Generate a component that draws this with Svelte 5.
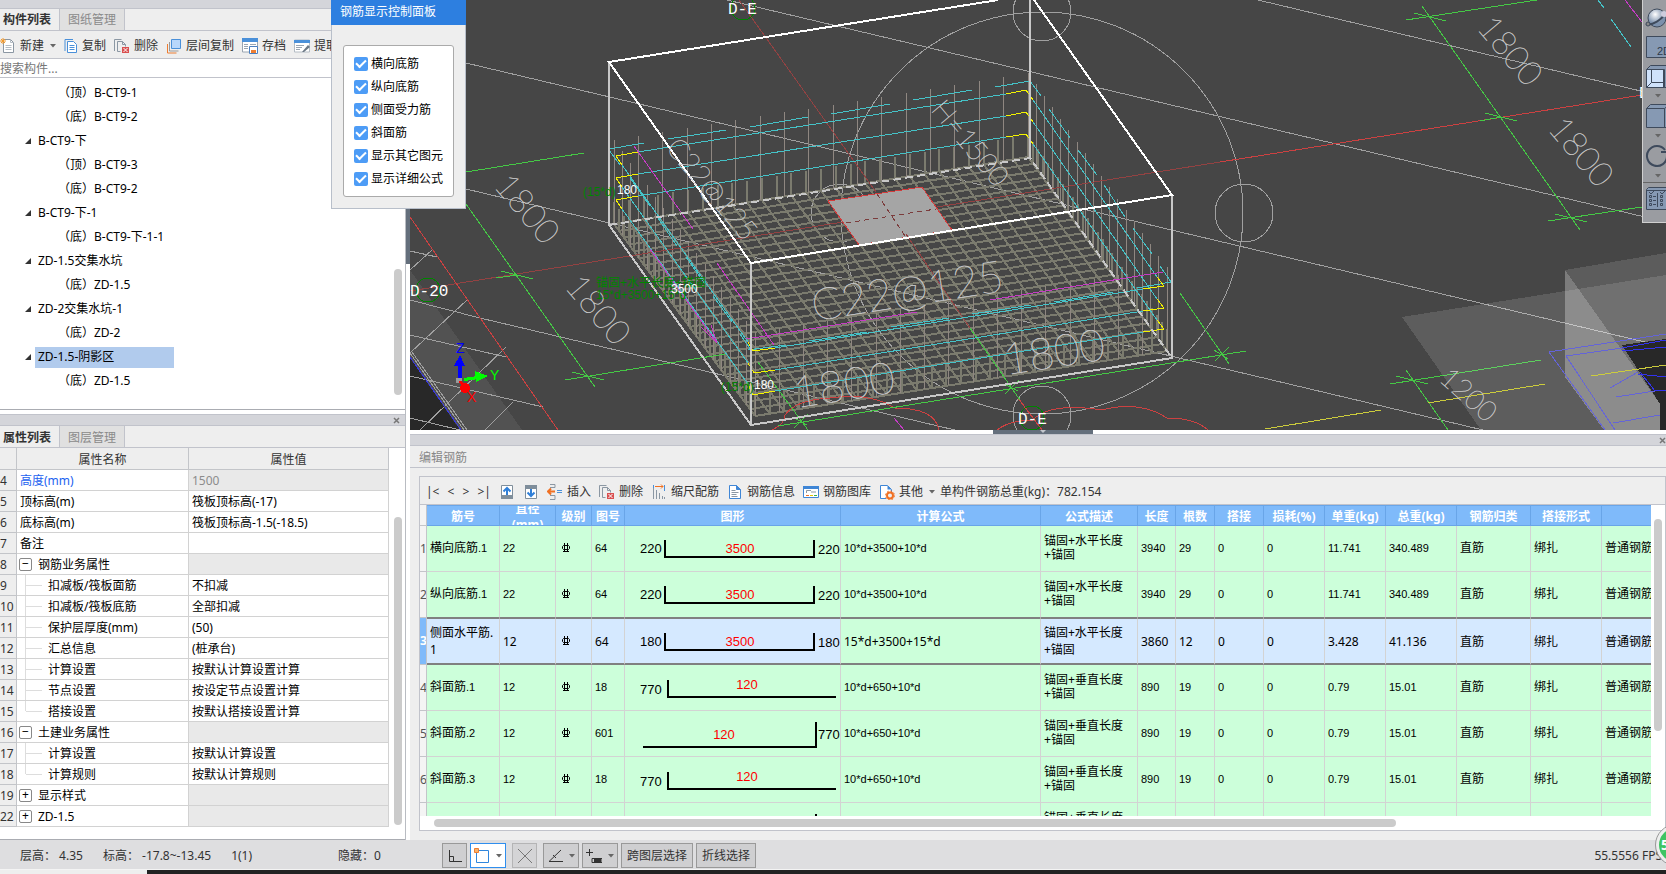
<script>
  const tree = [
    { t: '（顶）B-CT9-1', leaf: true },
    { t: '（底）B-CT9-2', leaf: true },
    { t: 'B-CT9-下' },
    { t: '（顶）B-CT9-3', leaf: true },
    { t: '（底）B-CT9-2', leaf: true },
    { t: 'B-CT9-下-1' },
    { t: '（底）B-CT9-下-1-1', leaf: true },
    { t: 'ZD-1.5交集水坑' },
    { t: '（底）ZD-1.5', leaf: true },
    { t: 'ZD-2交集水坑-1' },
    { t: '（底）ZD-2', leaf: true },
    { t: 'ZD-1.5-阴影区', sel: true },
    { t: '（底）ZD-1.5', leaf: true }
  ];
  const props = [
    { n: 4, k: '高度(mm)', v: '1500', link: true, off: true },
    { n: 5, k: '顶标高(m)', v: '筏板顶标高(-17)' },
    { n: 6, k: '底标高(m)', v: '筏板顶标高-1.5(-18.5)' },
    { n: 7, k: '备注', v: '' },
    { n: 8, k: '钢筋业务属性', v: '', box: '−', off: true },
    { n: 9, k: '扣减板/筏板面筋', v: '不扣减', sub: true },
    { n: 10, k: '扣减板/筏板底筋', v: '全部扣减', sub: true },
    { n: 11, k: '保护层厚度(mm)', v: '(50)', sub: true },
    { n: 12, k: '汇总信息', v: '(桩承台)', sub: true },
    { n: 13, k: '计算设置', v: '按默认计算设置计算', sub: true },
    { n: 14, k: '节点设置', v: '按设定节点设置计算', sub: true },
    { n: 15, k: '搭接设置', v: '按默认搭接设置计算', sub: true, last: true },
    { n: 16, k: '土建业务属性', v: '', box: '−', off: true },
    { n: 17, k: '计算设置', v: '按默认计算设置', sub: true },
    { n: 18, k: '计算规则', v: '按默认计算规则', sub: true, last: true },
    { n: 19, k: '显示样式', v: '', box: '+', off: true },
    { n: 22, k: 'ZD-1.5', v: '', box: '+', off: true }
  ];
  const checks = ['横向底筋', '纵向底筋', '侧面受力筋', '斜面筋', '显示其它图元', '显示详细公式'];
  const cols = [
    ['', 7], ['筋号', 73], ['直径(mm)', 56], ['级别', 36], ['图号', 33], ['图形', 216], ['计算公式', 200],
    ['公式描述', 97], ['长度', 38], ['根数', 39], ['搭接', 49], ['损耗(%)', 61], ['单重(kg)', 61],
    ['总重(kg)', 71], ['钢筋归类', 74], ['搭接形式', 71], ['', 120]
  ];
  const hd = '锚固+水平长度+锚固';
  const vd = '锚固+垂直长度+锚固';
  const rows = [
    { n: 1, name: '横向底筋', s: '1', d: 22, pic: '64', shape: 'u', side: 220, f: '10*d+3500+10*d', desc: hd, len: 3940, cnt: 29, w: '11.741', tw: '340.489' },
    { n: 2, name: '纵向底筋', s: '1', d: 22, pic: '64', shape: 'u', side: 220, f: '10*d+3500+10*d', desc: hd, len: 3940, cnt: 29, w: '11.741', tw: '340.489' },
    { n: 3, name: '侧面水平筋', s: '1', d: 12, pic: '64', shape: 'u', side: 180, f: '15*d+3500+15*d', desc: hd, len: 3860, cnt: 12, w: '3.428', tw: '41.136', sel: true },
    { n: 4, name: '斜面筋', s: '1', d: 12, pic: '18', shape: 'l', side: 770, f: '10*d+650+10*d', desc: vd, len: 890, cnt: 19, w: '0.79', tw: '15.01' },
    { n: 5, name: '斜面筋', s: '2', d: 12, pic: '601', shape: 'r', side: 770, f: '10*d+650+10*d', desc: vd, len: 890, cnt: 19, w: '0.79', tw: '15.01' },
    { n: 6, name: '斜面筋', s: '3', d: 12, pic: '18', shape: 'l', side: 770, f: '10*d+650+10*d', desc: vd, len: 890, cnt: 19, w: '0.79', tw: '15.01' },
    { n: 7, name: '斜面筋', s: '4', d: 12, pic: '601', shape: 'r', side: 770, f: '10*d+650+10*d', desc: vd, len: 890, cnt: 19, w: '0.79', tw: '15.01' }
  ];

  // Corners of the cage floor: back-left, back-right, front-right, front-left
  const A = [614, 224], B = [1028, 157], C = [1167, 351], D = [755, 416];
  const mix = (p, q, t) => [p[0] + (q[0] - p[0]) * t, p[1] + (q[1] - p[1]) * t];
  const seg = (p, q) => `M${p[0].toFixed(1)} ${p[1].toFixed(1)}L${q[0].toFixed(1)} ${q[1].toFixed(1)}`;
  let mesh = '', stubs = '', bars = '';
  const N = 28;
  for (let i = 0; i <= N; i++) {
    const t = i / N;
    mesh += seg(mix(A, B, t), mix(D, C, t)) + seg(mix(A, D, t), mix(B, C, t));
    for (const p of [mix(A, B, t), mix(D, C, t), mix(A, D, t), mix(B, C, t)]) stubs += seg(p, [p[0], p[1] - 22]);
  }
  for (let i = 0; i <= 17; i++) {
    const t = i / 17;
    for (const p of [mix(A, B, t), mix(D, C, t), mix(A, D, t), mix(B, C, t)]) bars += seg(p, [p[0], p[1] - 84]);
  }
  const crosses = [[517, 275], [588, 376], [1430, 17], [1501, 117], [1571, 218], [1412, 380]];
</script>

{#snippet doc()}<path d="M3.500 1.500h7l3 3v10h-10z" fill="#fff" stroke="#8b97a3" /><path d="M10.500 1.500v3h3M5.500 7.500h6M5.500 9.500h6M5.500 11.500h6" fill="none" stroke="#b4bcc4" />{/snippet}
{#snippet del()}<svg class="ic" viewBox="0 0 16 16"><path d="M.5 13V1.500h7" fill="none" stroke="#8b97a3" /><path d="M3.500 13.500v-10h5l3 3v2M8.500 3.500v3h3M3.500 13.500h3" fill="none" stroke="#8b97a3" /><path d="M8 9h7v6H8z" fill="#d95050" /><path d="M9.500 10l4 4m0-4l-4 4" stroke="#fff" /></svg>{/snippet}
{#snippet caret()}<svg class="caret" viewBox="0 0 6 4"><path d="M0 0h6L3 3.500z" fill="#666" /></svg>{/snippet}

<div class="app">
  <main>
    <section class="left">
      <div class="strip"></div>
      <nav class="tabs"><button class="on">构件列表</button><button>图纸管理</button></nav>
      <div class="tools">
        <button><svg class="ic" viewBox="0 0 16 16">{@render doc()}<path d="M3 0v6M0 3h6M1 1l4 4m0-4L1 5" stroke="#f29a2e" /></svg>新建{@render caret()}</button>
        <button><svg class="ic slim" viewBox="0 0 14 16"><path d="M1 13V1.500h8" fill="none" stroke="#4a90d9" /><path d="M3.500 3.500h6l3 3v8h-9z" fill="#fff" stroke="#4a90d9" /><path d="M5.500 7.500h5M5.500 9.500h5M5.500 11.500h5" stroke="#4a90d9" /></svg>复制</button>
        <button>{@render del()}删除</button>
        <button><svg class="ic" viewBox="0 0 16 16"><path d="M1.500 6v9h9" fill="none" stroke="#ee7d31" /><path d="M3.500 4v9h9" fill="none" stroke="#999" /><path d="M5.500 1.500h9v9h-9z" fill="#b8d7fb" stroke="#4a90d9" /></svg>层间复制</button>
        <button><svg class="ic" viewBox="0 0 16 16"><path d="M.5 1h15v13H.5z" fill="#fff" stroke="#9aa5b1" /><path d="M0 0h16v4H0z" fill="#4a90d9" /><path d="M2 6.500h4M2 8.500h4M2 10.500h4M8 6.500h6" stroke="#9aa5b1" /><path d="M7.500 8.500h8v7h-8z" fill="#fff" stroke="#4a7fc0" /><path d="M9 12h5v3H9z" fill="#ee7d31" /></svg>存档</button>
        <button><svg class="ic" viewBox="0 0 16 16"><path d="M.5 2h15v12H.5z" fill="#fff" stroke="#b4bcc4" /><path d="M0 2h16v3H0z" fill="#4a90d9" /><path d="M2 7.500h8M2 9.500h6M2 11.500h4" stroke="#9aa5b1" /><path d="M8 14l6-7 2 2-6 5z" fill="#6b7885" /></svg>提取</button>
      </div>
      <input class="search" aria-label="搜索构件" placeholder="搜索构件..." />
      <div class="tree">
        <ul>
          {#each tree as r}
            <li class:leaf={r.leaf}>
              {#if !r.leaf}<svg viewBox="0 0 6 6"><path d="M6 0v6H0z" fill="#333" /></svg>{/if}
              <button class:sel={r.sel}>{r.t}</button>
            </li>
          {/each}
        </ul>
        <i class="bar"></i>
      </div>
      <div class="strip second"><button aria-label="关闭"><svg viewBox="0 0 7 7"><path d="M1 1l5 5M6 1L1 6" stroke="#777" stroke-width="1.500" /></svg></button></div>
      <nav class="tabs low"><button class="on">属性列表</button><button>图层管理</button></nav>
      <div class="props">
        <table>
          <thead><tr><th class="no"></th><th class="key">属性名称</th><th>属性值</th></tr></thead>
          <tbody>
            {#each props as p}
              <tr>
                <th class="no">{p.n}</th>
                <td class:link={p.link} class:sub={p.sub} class:last={p.last}>
                  {#if p.box}<button class="box" aria-label="展开">{p.box}</button>{/if}{p.k}
                </td>
                <td class:off={p.off}>{p.v}</td>
              </tr>
            {/each}
          </tbody>
        </table>
        <i class="bar"></i>
      </div>
    </section>

    <div class="split"><i></i></div>

    <section class="right">
      <div class="view">
        <svg class="scene" viewBox="410 0 1256 430" preserveAspectRatio="xMinYMin slice">
          <path d="M410 270L522 430H461L410 357z" fill="#525252" />
          <path d="M410 358L460 430H410z" fill="#282828" />
          <g fill="none" stroke="#a0a0a0">
            <path d="M466 63L1666 347M727 0L1666 222M1258 0L1666 97M466 189L1483 430M480 318L955 430M410 251L437 257M410 300L480 318M410 335L506 357M410 376L543 407M410 418L460 430M410 270L432 250M410 353L467 300M420 430L506 347M485 430L513 402M410 353L464 430M412 352L467 430" />
            <circle cx="1042" cy="213" r="201" />
            <circle cx="1042" cy="12" r="29" /><circle cx="1244" cy="213" r="29" /><circle cx="840" cy="213" r="29" /><circle cx="1042" cy="415" r="29" />
          </g>
          <path d="M410 357L461 430" stroke="#3a3ae0" />
          <path d={mesh} class="mesh" />
          <path d={stubs} class="mesh" />
          <path d={bars} stroke="#8f8781" />
          <path d="M828 201L922 187 952 230 859 245z" fill="#a5a5a5" stroke="#d23c3c" />
          <path d="M739 0L876 192M906 234L970 328M410 291L843 222M937 207L1220 162" stroke="#934242" fill="none" />
          <path d="M846 223L936 209M877 194L905 236" stroke="#7b3c3c" stroke-dasharray="5 4" />
          <path d="M410 217L558 430M1220 162L1642 95M1018 398L1042 430" stroke="#cc4141" fill="none" />
          <path d="M772 430Q785 424 785 415 795 400 830 398 870 392 895 408 935 408 939 430M997 430Q1010 420 1033 420 1050 402 1102 410 1140 400 1167 418 1195 418 1208 430" stroke="#cc4141" fill="none" />
          <g fill="none" stroke="#45c845">
            <path d="M466 172L584 153M466 204L595 387M517 275L496 278M565 380L725 354M778 426L1246 351M1180 293L1229 364M970 328L1020 400M758 362L808 430M1406 20L1537 0M1422 6L1580 230M1480 121L1501 117M1548 221L1642 207M1390 384L1541 360M1406 370L1448 430" />
            {#each crosses as c}<path d={`M${c[0] - 16} ${c[1] - 4}l32 8`} />{/each}
            <path d="M794 428l14-14M1005 394l14-14M1215 361l14-14M793 417l14 8M1004 384l14 7M1214 350l14 9" />
          </g>
          <g fill="none" stroke="#45c3c8">
            <path d="M638 152L1006 94M638 174L1006 116M638 196L1006 137M775 348L1143 289M775 370L1143 311M775 391L1143 332" />
            <path d="M1033 100L1157 277M1033 122L1157 299M1033 144L1157 320M622 165L748 342M622 187L748 363M622 209L748 384" />
            <path d="M609 149L644 143M668 139L726 130M750 127L808 117M831 114L890 104M913 100L972 90M995 87L1030 81L1041 96M1049 109L1070 138M1078 150L1097 175M1104 185L1125 217M1133 228L1152 254M1160 266L1171 282L1137 288M748 350L786 345M809 341L867 332M891 327L949 318M972 314L1031 305M1054 302L1113 292M609 150L620 165M630 178L650 206M658 218L677 246M686 257L705 284M713 296L732 322M740 334L751 350M1598 0L1604 8M1611 19L1631 47" />
          </g>
          <path d="M638 152L616 156 622 165M638 174L616 178 622 187M638 196L616 200 622 209M1006 94L1026 90 1033 100M1006 116L1026 112 1033 122M1006 137L1026 134 1033 144M775 348L753 351 748 342M775 370L754 373 748 363M775 391L753 395 748 384M1143 289L1164 286 1157 277M1143 311L1164 308 1157 299M1143 332L1164 329 1157 320" fill="none" stroke="#f4f400" />
          <path d="M634 146L693 229M650 249L717 343M717 263L774 345M746 339L917 312M990 300L1163 272M717 343L701 327M717 343L711 325M894 418l10 12M1625 0L1642 22" fill="none" stroke="#c63cc6" />
          <g fill="none" stroke="#c8c8c8" stroke-width="2">
            <path d="M609 62V225L751 425 1172 358V195M751 263V425M1030 0V158" />
            <path d="M609 225L1030 158 1172 358" stroke-dasharray="8 4" />
          </g>
          <path d="M998 0L609 62 751 263 1172 195 1034 0" fill="none" stroke="#fff" stroke-width="2" />
          <path d="M1402 317L1666 275V430H1481z" fill="#fff" fill-opacity=".13" />
          <path d="M1565 270L1666 253V430H1604L1565 377z" fill="#fff" fill-opacity=".12" />
          <path d="M1622 345L1666 339V430H1660V404z" fill="#282828" />
          <path d="M1565 270L1660 404V430H1604L1565 377z" fill="#fff" fill-opacity=".2" />
          <path d="M1605 430L1549 352 1666 334M1615 430L1566 356 1622 348M1613 423L1660 415M1610 388L1638 372M1616 397L1655 391" fill="none" stroke="#6464d8" />
          <path d="M1622 348L1666 340M1622 351L1666 347M1638 374L1666 377M1640 372L1655 391 1666 390" fill="none" stroke="#3232f0" />
          <path d="M1265 429L1381 410M1428 403L1545 384M1591 376L1666 365" stroke="#cccc3c" />
          <g class="plan">
            <text transform="translate(1476 28) rotate(50)">1800</text>
            <text transform="translate(1547 129) rotate(50)">1800</text>
            <text transform="translate(493 186) rotate(50)">1800</text>
            <text transform="translate(564 287) rotate(50)">1800</text>
            <text transform="translate(1438 380) rotate(42)" class="small">1200</text>
            <text transform="translate(665 148) rotate(50)" class="small">C22@125</text>
            <text transform="translate(930 110) rotate(50)" class="small">H=1500</text>
            <text class="big" transform="translate(814 321) rotate(-9)">C22@125</text>
            <text class="big" transform="translate(1006 375) rotate(-9)">1800</text>
            <text class="big" transform="translate(796 408) rotate(-9)">1800</text>
          </g>
          <g fill="none" stroke="#008400"><circle cx="743" cy="8" r="12" /><circle cx="428" cy="290" r="12" /><circle cx="1032" cy="418" r="12" /></g>
          <g class="axis"><text x="728" y="14">D-E</text><text x="410" y="296">D-20</text><text x="1018" y="424">D-E</text><text x="1639" y="98">D</text></g>
          <g class="dim">
            <text x="583" y="196" class="gr">(15*d)</text><text x="617" y="194">180</text>
            <text x="596" y="287" class="gr">锚固+水平长度+锚固</text><text x="596" y="299" class="gr">15*d+3500+15*d</text><text x="671" y="293">3500</text>
            <text x="721" y="391" class="gr">(15*d)</text><text x="754" y="389">180</text>
          </g>
          <path d="M460 381V364" stroke="#00f" stroke-width="4" /><path d="M454 366l6-11 5 11z" fill="#00f" />
          <path d="M464 379.500L478 377.500" stroke="#0f0" stroke-width="3" /><path d="M475 371l13 5-12 6z" fill="#0f0" />
          <path d="M456 378h6v5h-6z" fill="#999" /><circle cx="465" cy="388" r="5" fill="#f00" /><path d="M460 381l5 7" stroke="#f00" stroke-width="3" />
          <text x="456" y="353" class="xyz" fill="#00f">Z</text><text x="490" y="380" class="xyz" fill="#0f0">Y</text><text x="467" y="402" class="xyz" fill="#f00">X</text>
        </svg>

        <div class="orbit">
          <button aria-label="动态观察"><svg viewBox="0 0 30 28"><defs><radialGradient id="ball" cx=".4" cy=".3"><stop offset="0" stop-color="#fff" /><stop offset="1" stop-color="#7b90ac" /></radialGradient></defs><circle cx="14" cy="14" r="9" fill="url(#ball)" stroke="#3e4a5c" /><path d="M3 20c6 2 16-4 21-13" fill="none" stroke="#3e4a5c" stroke-width="2" /><circle cx="5" cy="20" r="2" fill="#888" stroke="#3e4a5c" /><circle cx="21" cy="10" r="3" fill="#ccd" /></svg></button>
          <button aria-label="二维"><svg viewBox="0 0 30 28"><path d="M3.500 4.500h26v21h-26z" class="blue" /><text x="14" y="23" class="two">2D</text></svg></button>
          <button aria-label="线框" class="gap"><svg viewBox="0 0 30 28"><path d="M3.500 7.500l4-4h22v22h-26z" class="blue" /><path d="M3.500 7.500h18v18h-18z" class="lit" /><path d="M8.500 7.500v13h13M3.500 25.500l5-5M20.500 7v19" class="ln" /></svg></button>
          {@render caret()}
          <button aria-label="实体"><svg viewBox="0 0 30 28"><path d="M3.500 6.500l4-4h22v23h-26zM3.500 6.500h18v19M21.500 6.500l5-4" class="blue" /></svg></button>
          {@render caret()}
          <button aria-label="旋转"><svg viewBox="0 0 30 28"><path d="M22 8a10 10 0 1 0 2 6" class="ln thick" /><path d="M18 10h6V4" class="ln thick" /></svg></button>
          {@render caret()}
          <hr />
          <button aria-label="显示设置"><svg viewBox="0 0 30 28"><path d="M3.500 6.500l2-2h24v22h-26zM3.500 7.500h24" class="blue" /><path d="M14.500 10v14M6 9l2 2 3-3M17 9l2 2 3-3M10 13.500h3M10 17.500h3M10 21.500h3M6.500 12.500h2v2h-2zM6.500 16.500h2v2h-2zM6.500 20.500h2v2h-2zM17.500 12.500h2v2h-2zM17.500 16.500h2v2h-2zM17.500 20.500h2v2h-2z" class="ln" /></svg></button>
        </div>
      </div>

      <div class="grip"><i><svg viewBox="0 0 6 3"><path d="M0 0h6L3 3z" fill="#c3c8ce" /></svg></i></div>
      <div class="strip wide"><button aria-label="关闭"><svg viewBox="0 0 7 7"><path d="M1 1l5 5M6 1L1 6" stroke="#777" stroke-width="1.500" /></svg></button></div>
      <h2>编辑钢筋</h2>
      <div class="editor">
        <div class="tools rt">
          <div class="nav"><button>|&lt;</button><button>&lt;</button><button>&gt;</button><button>&gt;|</button></div>
          <button aria-label="上移"><svg class="ic" viewBox="0 0 16 16"><path d="M2.500 1.500h11v12h-11z" fill="#fff" stroke="#7f8e9b" /><path d="M2 11h12v4H2z" fill="#7f8e9b" /><path d="M8 11V4M4.500 7.500L8 4l3.500 3.500" fill="none" stroke="#2f7fd8" stroke-width="2" /></svg></button>
          <button aria-label="下移"><svg class="ic" viewBox="0 0 16 16"><path d="M2.500 2.500h11v12h-11z" fill="#fff" stroke="#7f8e9b" /><path d="M2 1h12v4H2z" fill="#7f8e9b" /><path d="M8 5v7M4.500 8.500L8 12l3.500-3.500" fill="none" stroke="#2f7fd8" stroke-width="2" /></svg></button>
          <button><svg class="ic" viewBox="0 0 16 16"><path d="M3 .5h5v3H3M3 15.500h5v-4H3" fill="none" stroke="#8b97a3" /><path d="M1 7.500h7M4 4.500l-3 3 3 3" fill="none" stroke="#f07022" stroke-width="2" /><path d="M10 6.500h5M10 8.500h5" stroke="#4a90d9" /></svg>插入</button>
          <button>{@render del()}删除</button>
          <button><svg class="ic" viewBox="0 0 16 16"><path d="M2.500 1v14M5.500 6v9M8.500 9v6M11.500 12v3M13.500 13v2" stroke="#8b97a3" /><path d="M2.500 1v3M13.500 1v6" stroke="#4a90d9" /><path d="M4 2.500h8M10 .5l2 2-2 2" stroke="#f07022" fill="none" /></svg>缩尺配筋</button>
          <button><svg class="ic" viewBox="0 0 16 16"><path d="M2.500 1.500h7l4 4v9h-11z" fill="#fff" stroke="#3f86d6" /><path d="M9.500 1.500v4h4z" fill="#3f86d6" stroke="#3f86d6" /><path d="M4.500 6.500h4M4.500 8.500h7M4.500 10.500h5M4.500 12.500h6" stroke="#8b97a3" /></svg>钢筋信息</button>
          <button><svg class="ic" viewBox="0 0 16 16"><path d="M.5 2.500h15v11H.5z" fill="#fff" stroke="#3f86d6" /><path d="M0 2h16v3H0z" fill="#3f86d6" /><path d="M3.500 9V6.500H8M8 8h5" fill="none" stroke="#8b97a3" /><path d="M3 11.500h3" stroke="#f07022" /><path d="M7 11.500h3" stroke="#e3c300" /><path d="M11 11.500h3" stroke="#39b54a" /></svg>钢筋图库</button>
          <button><svg class="ic" viewBox="0 0 16 16"><path d="M7 14.500H1.500v-13h7l4 4V8" fill="#fff" stroke="#3f86d6" /><path d="M8.500 1.500v4h4z" fill="#3f86d6" /><circle cx="11" cy="11.500" r="3" fill="none" stroke="#f07022" stroke-width="2" /><circle cx="11" cy="11.500" r="4.500" fill="none" stroke="#f07022" stroke-dasharray="1.800 1.700" /></svg>其他{@render caret()}</button>
          <span class="total">单构件钢筋总重(kg)：782.154</span>
        </div>
        <div class="grid">
          <div class="clip">
            <table>
              <colgroup>{#each cols as c}<col style:width={`${c[1]}px`} />{/each}</colgroup>
              <thead><tr>{#each cols as c, i}<th class:no={i === 0}><div>{c[0]}</div></th>{/each}</tr></thead>
              <tbody>
                {#each rows as r, i}
                  <tr class:sel={r.sel} class:before={rows[i + 1]?.sel}>
                    <th class="no">{r.n}</th>
                    <td class="cjk">{r.name}<span class="num">.<wbr />{r.s}</span></td>
                    <td class="num">{r.d}</td>
                    <td><svg class="grade" viewBox="0 0 10 10"><path d="M3.500 0v9M6.500 0v9M3.500 2.500h-1l-1 1v2l1 1h5l1-1v-2l-1-1zM2 8.500h6" fill="none" stroke="#000" /></svg></td>
                    <td class="num">{r.pic}</td>
                    <td class="pic">
                      <svg viewBox="0 0 215 44">
                        {#if r.shape === 'u'}
                          <path d="M40 14V31H189V14" /><text x="15" y="27">{r.side}</text><text x="193" y="28">{r.side}</text><text x="115" y="27" class="mid">3500</text>
                        {:else if r.shape === 'l'}
                          <path d="M43 15V32H211" /><text x="15" y="29">{r.side}</text><text x="122" y="24" class="mid">120</text>
                        {:else}
                          <path d="M18 36H191V11" /><text x="193" y="28">{r.side}</text><text x="99" y="28" class="mid">120</text>
                        {/if}
                      </svg>
                    </td>
                    <td class="num green">{r.f}</td>
                    <td class="cjk desc">{r.desc}</td>
                    <td class="num">{r.len}</td>
                    <td class="num">{r.cnt}</td>
                    <td class="num">0</td>
                    <td class="num">0</td>
                    <td class="num">{r.w}</td>
                    <td class="num">{r.tw}</td>
                    <td class="cjk">直筋</td>
                    <td class="cjk">绑扎</td>
                    <td class="cjk">普通钢筋</td>
                  </tr>
                {/each}
              </tbody>
            </table>
          </div>
          <i class="bar"></i>
          <i class="hbar"></i>
        </div>
      </div>
    </section>

    <div class="dialog">
      <h3>钢筋显示控制面板</h3>
      <div class="group">
        {#each checks as c}<label><input type="checkbox" checked />{c}</label>{/each}
      </div>
    </div>
  </main>

  <footer>
    <div class="info"><span>层高：&nbsp;4.35</span><span>标高：&nbsp;-17.8~-13.45</span><span>1(1)</span><span class="hid">隐藏：0</span></div>
    <button class="sq" aria-label="正交"><svg viewBox="0 0 16 16"><path d="M2.500 2v11.500H15M2.500 8.500h4v5" /></svg></button>
    <button class="dd act" aria-label="框选"><svg viewBox="0 0 16 16"><path d="M2.500 2.500h12v12h-12z" class="frame" /><path d="M.5.5h4v4h-4z" class="knob" /></svg>{@render caret()}</button>
    <button class="sq dim2" aria-label="交点"><svg viewBox="0 0 16 16"><path d="M1 1l14 14M15 1L1 15" /></svg></button>
    <button class="dd" aria-label="角度"><svg viewBox="0 0 16 16"><path d="M14 2L2 13.500h14M6 7l3 3" /></svg>{@render caret()}</button>
    <button class="dd" aria-label="坐标"><svg viewBox="0 0 16 16"><path d="M0 4.500h7M3.500 1v7M6 10.500h10v4H6z" /><path d="M8 12.500h7" stroke-width="4" /></svg>{@render caret()}</button>
    <button class="tx">跨图层选择</button>
    <button class="tx">折线选择</button>
    <span class="fps">55.5556 FPS</span>
    <b class="ball">56</b>
  </footer>
  <div class="task"><i></i></div>
</div>

<style>
  :global(body) { margin: 0; background: #fff; }
  * { box-sizing: border-box; }
  .app { position: relative; display: flex; flex-direction: column; height: 100vh; min-height: 780px; overflow: hidden; font: 12px/16px "Noto Sans", "Noto Sans CJK SC", sans-serif; color: #333; }
  button { font: inherit; color: inherit; background: none; border: 0; padding: 0; margin: 0; white-space: nowrap; }
  svg { display: block; flex: none; }
  table { border-collapse: separate; border-spacing: 0; table-layout: fixed; }
  main { flex: 1; min-height: 0; display: flex; position: relative; }
  .left { width: 406px; flex: none; display: flex; flex-direction: column; border-right: 1px solid #b9bcc2; }
  .strip { height: 9px; background: #d4d5da; border-bottom: 1px solid #c1c3cb; flex: none; display: flex; justify-content: flex-end; align-items: center; }
  .strip.second, .strip.wide { height: 12px; border-top: 1px solid #c1c3cb; }
  .strip.second { margin-top: 4px; padding-right: 5px; }
  .strip svg { width: 7px; height: 7px; }
  .tabs { height: 22px; flex: none; display: flex; background: #eee; border-bottom: 1px solid #c1c3cb; }
  .tabs button { width: 65px; background: #e0e0e0; color: #8a8a8a; border-right: 1px solid #c1c3cb; }
  .tabs .on { width: 60px; background: #eee; color: #333; font-weight: 700; text-align: left; padding-left: 3px; }
  .low button { padding-top: 2px; }
  .tools { height: 28px; flex: none; display: flex; align-items: center; gap: 8px; background: #eee; border-bottom: 1px solid #c1c3cb; overflow: hidden; padding-top: 2px; }
  .tools button { display: flex; align-items: center; gap: 4px; }
  .ic { width: 16px; height: 16px; }
  .slim { width: 14px; }
  .caret { width: 6px; height: 4px; margin-left: 2px; }
  .search { height: 19px; flex: none; border: 0; border-bottom: 1px solid #c1c3cb; padding: 0; font: inherit; outline: 0; width: 100%; background: #fff; }
  .search::placeholder { color: #777; opacity: 1; }
  .tree { flex: 1; min-height: 0; position: relative; border-bottom: 1px solid #aaacb2; background: #fff; overflow: hidden; color: #000; }
  .tree ul { list-style: none; margin: 0; padding: 3px 0 0; }
  .tree li { height: 24px; display: flex; align-items: center; gap: 4px; padding-left: 25px; }
  .tree li svg { width: 6px; height: 6px; }
  .tree .leaf { padding-left: 58px; }
  .tree li:not(.leaf) button { padding: 0 3px; height: 21px; }
  .tree .sel { background: #b1cbed; width: 139px; text-align: left; }
  .bar { position: absolute; width: 8px; border-radius: 4px; background: #cbcbcb; right: 3px; }
  .tree .bar { top: 191px; bottom: 14px; }
  .props { position: relative; background: #fff; border-bottom: 1px solid #aaacb2; padding-bottom: 12px; color: #000; }
  .props table { width: 389px; }
  .props th { height: 22px; padding: 2px 0 0; background: #eee; font-weight: 400; color: #333; border-right: 1px solid #c3c5c9; border-bottom: 1px solid #c3c5c9; }
  .props .no { width: 17px; text-align: left; height: 21px; }
  .props .key { width: 172px; }
  .props td { height: 21px; padding: 2px 3px 0; white-space: nowrap; overflow: hidden; border-right: 1px solid #d2d2d2; border-bottom: 1px solid #d2d2d2; }
  .props .off { background: #e9e9e9; color: #8c8c8c; }
  .props .link { color: #1c62f0; }
  .props .sub { padding-left: 31px; background: linear-gradient(#ddd, #ddd) 8px 0 / 1px 100% no-repeat, linear-gradient(#ddd, #ddd) 9px 10px / 16px 1px no-repeat; }
  .props .sub.last { background: linear-gradient(#ddd, #ddd) 8px 0 / 1px 10px no-repeat, linear-gradient(#ddd, #ddd) 9px 10px / 16px 1px no-repeat; }
  .box { width: 13px; height: 13px; border: 1px solid #888; border-radius: 2px; background: #fff; line-height: 10px; margin: 0 6px 0 -1px; text-align: center; vertical-align: 1px; }
  .props .bar { top: 69px; bottom: 14px; }
  .split { width: 4px; flex: none; background: #fff; }
  .split i { display: block; height: 264px; background: #646f7c; }
  .right { flex: 1; min-width: 0; display: flex; flex-direction: column; background: #eee; }
  .view { flex: 1; min-height: 0; position: relative; background: #464646; overflow: hidden; }
  .scene { width: 100%; height: 100%; shape-rendering: crispEdges; }
  .mesh { fill: none; stroke: #7b7b6e; stroke-width: 2; }
  .plan { fill: #c8c8c8; stroke: #c8c8c8; stroke-width: .4px; font: 100 34px Lato, sans-serif; }
  .plan .small { font-size: 28px; }
  .plan .big { font-size: 44px; }
  .axis { fill: #fff; font: 16px "Liberation Mono", monospace; }
  .dim { fill: #fff; font: 12px "Liberation Sans", "Noto Sans CJK SC", sans-serif; }
  .dim .gr { fill: #008400; }
  .xyz { font: 14px "Liberation Sans", sans-serif; }
  .orbit { position: absolute; right: 0; top: 0; width: 24px; padding: 4px 0 11px; background: #9a9ca1; border-left: 1px solid #d0d0d0; border-bottom: 1px solid #d0d0d0; overflow: hidden; }
  .orbit svg { width: 30px; height: 28px; }
  .orbit .caret { width: 6px; height: 4px; margin: 4px 0 4px 12px; }
  .orbit hr { margin: 0; border: 0; border-top: 1px solid #666; }
  .orbit button { display: block; }
  .orbit .gap { margin-top: 2px; }
  .blue { fill: #8699b3; stroke: #3e4a5c; }
  .lit { fill: #cfe2fb; stroke: #3e4a5c; }
  .ln { fill: none; stroke: #3e4a5c; }
  .thick { stroke-width: 2; }
  .two { font: 11px "Liberation Sans", sans-serif; fill: #2d3848; }
  .grip { height: 4px; flex: none; background: #fff; display: flex; justify-content: center; }
  .grip i { width: 100px; background: #646f7c; display: flex; justify-content: center; margin-left: 10px; }
  .grip svg { width: 6px; height: 3px; }
  h2 { margin: 0 0 8px; height: 22px; font: inherit; line-height: 23px; padding-left: 9px; color: #888; border-bottom: 1px solid #c1c3cb; }
  .editor { margin: 0 0 9px 9px; border: 1px solid #c1c3cb; }
  .rt { padding-left: 6px; }
  .nav { display: flex; gap: 8px; }
  .nav button { min-width: 7px; }
  .total { margin-left: -3px; white-space: nowrap; }
  .grid { position: relative; background: #fff; padding: 0 14px 14px 0; }
  .clip { overflow: hidden; height: 311px; }
  .grid table { width: 1302px; color: #000; }
  .grid th { height: 21px; padding: 0; background: #7fbafa; color: #fff; font-weight: 700; border-right: 1px solid #69a5e8; border-bottom: 1px solid #69a5e8; border-top: 1px solid #69a5e8; }
  .grid th div { height: 19px; overflow: hidden; display: flex; align-items: center; justify-content: center; text-align: center; padding: 2px 8px 0; }
  .grid th:not(:nth-child(3)) div { white-space: nowrap; padding: 2px 0 0; }
  .grid .no { background: #f4f4f4; color: #555; font-weight: 400; border-top: 0; border-right: 1px solid #c3c5c9; border-bottom: 1px solid #c3c5c9; overflow: hidden; }
  .grid td { height: 46px; padding: 0 3px 2px; background: #ccffda; border-right: 1px solid #d3d3d3; border-bottom: 1px solid #d3d3d3; line-height: 14px; overflow: hidden; }
  .grid td.cjk:last-child { white-space: nowrap; }
  .cjk { font-family: "Liberation Sans", "Noto Sans CJK SC", sans-serif; }
  .num { font: 11px/14px "Liberation Sans", sans-serif; white-space: nowrap; }
  .grid .before td { border-bottom-color: #808080; }
  .grid .sel td { background: #d5e9ff; border-top: 1px solid #808080; border-bottom: 2px solid #808080; padding-bottom: 0; font: 12px/17px "Noto Sans", "Noto Sans CJK SC", sans-serif; }
  .grid .sel .cjk .num { font: inherit; white-space: normal; }
  .grid .sel .green { background: #ccffda; }
  .grid .sel .no { background: #7fbafa; color: #fff; font-weight: 700; }
  .grade { width: 10px; height: 10px; margin-left: 2px; }
  .grid td.pic, .grid .sel td.pic { padding: 0; vertical-align: top; }
  .pic svg { width: 215px; height: 44px; }
  .pic path { fill: none; stroke: #000; stroke-width: 2; }
  .pic text { font: 13px "Liberation Sans", sans-serif; }
  .pic .mid { fill: #f00; text-anchor: middle; }
  .grid .bar { top: 14px; height: 212px; }
  .hbar { position: absolute; left: 14px; right: 269px; bottom: 3px; height: 8px; border-radius: 4px; background: #cbcbcb; }
  .dialog { position: absolute; left: 331px; top: 0; width: 135px; height: 209px; background: #eee; border: 1px solid #b8bfca; border-top: 0; }
  h3 { margin: 0 -1px; height: 25px; padding-left: 9px; font: inherit; line-height: 24px; color: #fff; background: #2d7fe0; }
  .group { margin: 20px 11px 0; height: 152px; padding: 8px 0 0 10px; background: #fff; border: 1px solid #aaa; border-radius: 3px; }
  .group label { display: flex; align-items: center; gap: 3px; height: 23px; color: #000; white-space: nowrap; padding-bottom: 4px; }
  .group input { appearance: none; width: 14px; height: 14px; margin: 0; background: #4d9cf6; border-radius: 2px; display: grid; place-items: center; }
  .group input::after { content: ""; width: 8px; height: 4px; border: solid #fff; border-width: 0 0 2px 2px; transform: rotate(-45deg) translate(1px, -1px); }
  footer { height: 30px; flex: none; display: flex; align-items: center; background: #dedee0; border-bottom: 1px solid #f4f4f4; position: relative; padding-top: 2px; }
  footer button { height: 25px; border: 1px solid #999; background: #cfcfd1; display: flex; align-items: center; justify-content: center; margin-right: 3px; }
  footer svg { width: 16px; height: 16px; }
  footer path { fill: none; stroke: #333; }
  footer .frame { fill: #fff; stroke: #2f86dd; }
  footer .knob { fill: #f6b26b; stroke: #ee7d31; }
  footer .caret { width: 6px; height: 4px; margin-left: 6px; }
  footer .caret path { fill: #666; stroke: none; }
  .info { width: 442px; flex: none; display: flex; gap: 20px; padding-left: 20px; }
  .hid { margin-left: 66px; }
  .sq { width: 25px; }
  .dd { width: 36px; }
  footer .act { background: #fff; border-color: #2f8eee; margin-right: 6px; }
  footer .dim2 { opacity: .6; margin-right: 6px; }
  footer .tx { padding: 0 5px; }
  .fps { margin-left: auto; padding-right: 4px; }
  .ball { position: absolute; right: -30px; top: -15px; width: 40px; height: 40px; border-radius: 50%; background: #3fc463; border: 3px solid #eee; outline: 1px solid #999; color: #fff; font-size: 14px; line-height: 34px; padding-left: 2px; }
  .task { height: 4px; flex: none; background: #222; position: relative; z-index: 1; }
  .task i { display: block; width: 147px; height: 4px; background: #eee; }
</style>
